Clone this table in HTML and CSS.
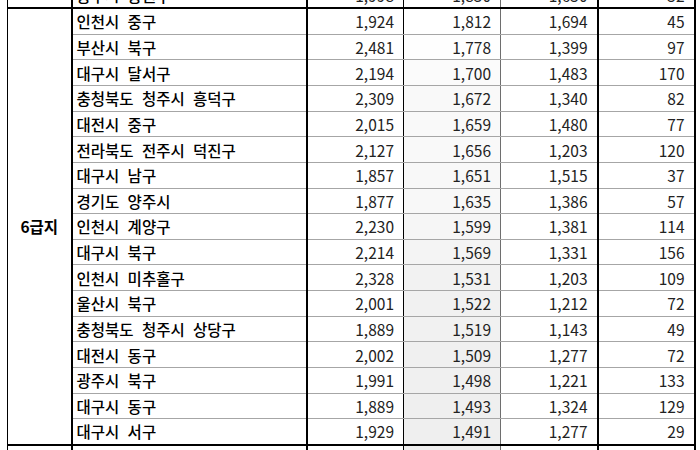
FILE: index.html
```html
<!DOCTYPE html>
<html lang="ko">
<head>
<meta charset="utf-8">
<link rel="stylesheet" href="styles.css">
</head>
<body>
<div class="viewport">
<table class="sheet">
  <colgroup>
    <col class="c-grp"><col class="c-name"><col class="c-num"><col class="c-num"><col class="c-num"><col class="c-last">
  </colgroup>
  <tbody class="prev">
    <tr><td class="grp"></td><td class="name">충주시 중원구</td><td class="num a">1,998</td><td class="num b" style="background:#ffffff">1,830</td><td class="num c">1,650</td><td class="num d">52</td></tr>
  </tbody>
  <tbody class="group">
    <tr><td class="grp" rowspan="17">6급지</td><td class="name">인천시 중구</td><td class="num a">1,924</td><td class="num b" style="background:#ffffff">1,812</td><td class="num c">1,694</td><td class="num d">45</td></tr>
    <tr><td class="name">부산시 북구</td><td class="num a">2,481</td><td class="num b" style="background:#fefefe">1,778</td><td class="num c">1,399</td><td class="num d">97</td></tr>
    <tr><td class="name">대구시 달서구</td><td class="num a">2,194</td><td class="num b" style="background:#fbfbfb">1,700</td><td class="num c">1,483</td><td class="num d">170</td></tr>
    <tr><td class="name">충청북도 청주시 흥덕구</td><td class="num a">2,309</td><td class="num b" style="background:#f9f9f9">1,672</td><td class="num c">1,340</td><td class="num d">82</td></tr>
    <tr><td class="name">대전시 중구</td><td class="num a">2,015</td><td class="num b" style="background:#f9f9f9">1,659</td><td class="num c">1,480</td><td class="num d">77</td></tr>
    <tr><td class="name">전라북도 전주시 덕진구</td><td class="num a">2,127</td><td class="num b" style="background:#f9f9f9">1,656</td><td class="num c">1,203</td><td class="num d">120</td></tr>
    <tr><td class="name">대구시 남구</td><td class="num a">1,857</td><td class="num b" style="background:#f8f8f8">1,651</td><td class="num c">1,515</td><td class="num d">37</td></tr>
    <tr><td class="name">경기도 양주시</td><td class="num a">1,877</td><td class="num b" style="background:#f8f8f8">1,635</td><td class="num c">1,386</td><td class="num d">57</td></tr>
    <tr><td class="name">인천시 계양구</td><td class="num a">2,230</td><td class="num b" style="background:#f6f6f6">1,599</td><td class="num c">1,381</td><td class="num d">114</td></tr>
    <tr><td class="name">대구시 북구</td><td class="num a">2,214</td><td class="num b" style="background:#f4f4f4">1,569</td><td class="num c">1,331</td><td class="num d">156</td></tr>
    <tr><td class="name">인천시 미추홀구</td><td class="num a">2,328</td><td class="num b" style="background:#f2f2f2">1,531</td><td class="num c">1,203</td><td class="num d">109</td></tr>
    <tr><td class="name">울산시 북구</td><td class="num a">2,001</td><td class="num b" style="background:#f1f1f1">1,522</td><td class="num c">1,212</td><td class="num d">72</td></tr>
    <tr><td class="name">충청북도 청주시 상당구</td><td class="num a">1,889</td><td class="num b" style="background:#f1f1f1">1,519</td><td class="num c">1,143</td><td class="num d">49</td></tr>
    <tr><td class="name">대전시 동구</td><td class="num a">2,002</td><td class="num b" style="background:#f0f0f0">1,509</td><td class="num c">1,277</td><td class="num d">72</td></tr>
    <tr><td class="name">광주시 북구</td><td class="num a">1,991</td><td class="num b" style="background:#f0f0f0">1,498</td><td class="num c">1,221</td><td class="num d">133</td></tr>
    <tr><td class="name">대구시 동구</td><td class="num a">1,889</td><td class="num b" style="background:#efefef">1,493</td><td class="num c">1,324</td><td class="num d">129</td></tr>
    <tr><td class="name">대구시 서구</td><td class="num a">1,929</td><td class="num b" style="background:#efefef">1,491</td><td class="num c">1,277</td><td class="num d">29</td></tr>
  </tbody>
  <tbody class="next">
    <tr><td class="grp"></td><td class="name"></td><td class="num a"></td><td class="num b" style="background:#eeeeee"></td><td class="num c"></td><td class="num d"></td></tr>
  </tbody>
</table>
</div>
</body>
</html>
```

FILE: styles.css
```css
html, body {
  margin: 0;
  padding: 0;
  background: #ffffff;
}

.viewport {
  width: 700px;
  height: 450px;
  overflow: hidden;
  padding-left: 7px;
  box-sizing: border-box;
}

.sheet {
  border-collapse: collapse;
  table-layout: fixed;
  width: 687px;
  margin-top: -18.5px;
  font-family: "Noto Sans CJK KR", "Noto Sans", sans-serif;
  font-size: 15.5px;
  color: #000;
}

.c-grp { width: 64px; }
.c-name { width: 235px; }
.c-num { width: 97px; }
.c-last { width: 97px; }

.sheet td {
  height: 24.64px;
  padding: 0;
  border-top: 1px solid #a6a6a6;
  border-bottom: 1px solid #a6a6a6;
  white-space: nowrap;
  overflow: hidden;
  line-height: 20px;
}

.group tr:first-child td,
.group .grp {
  border-top: 2px solid #000;
}

.group tr:last-child td,
.group .grp {
  border-bottom: 2px solid #000;
}

.grp {
  border-left: 1px solid #000;
  border-right: 2px solid #000;
  text-align: center;
  vertical-align: middle;
  font-weight: bold;
  padding-top: 2px;
}

.name {
  padding-left: 4px !important;
  border-right: 2px solid #000;
  font-weight: 500;
  word-spacing: 4px;
}

.num {
  text-align: right;
  color: #222;
  padding-right: 9px !important;
}

.num.a { border-right: 1px solid #000; }
.num.b { border-right: 1px solid #6e6e6e; }
.num.c { border-right: 2px solid #000; }
.num.d { border-right: 2px solid #000; padding-right: 9px !important; }
```
